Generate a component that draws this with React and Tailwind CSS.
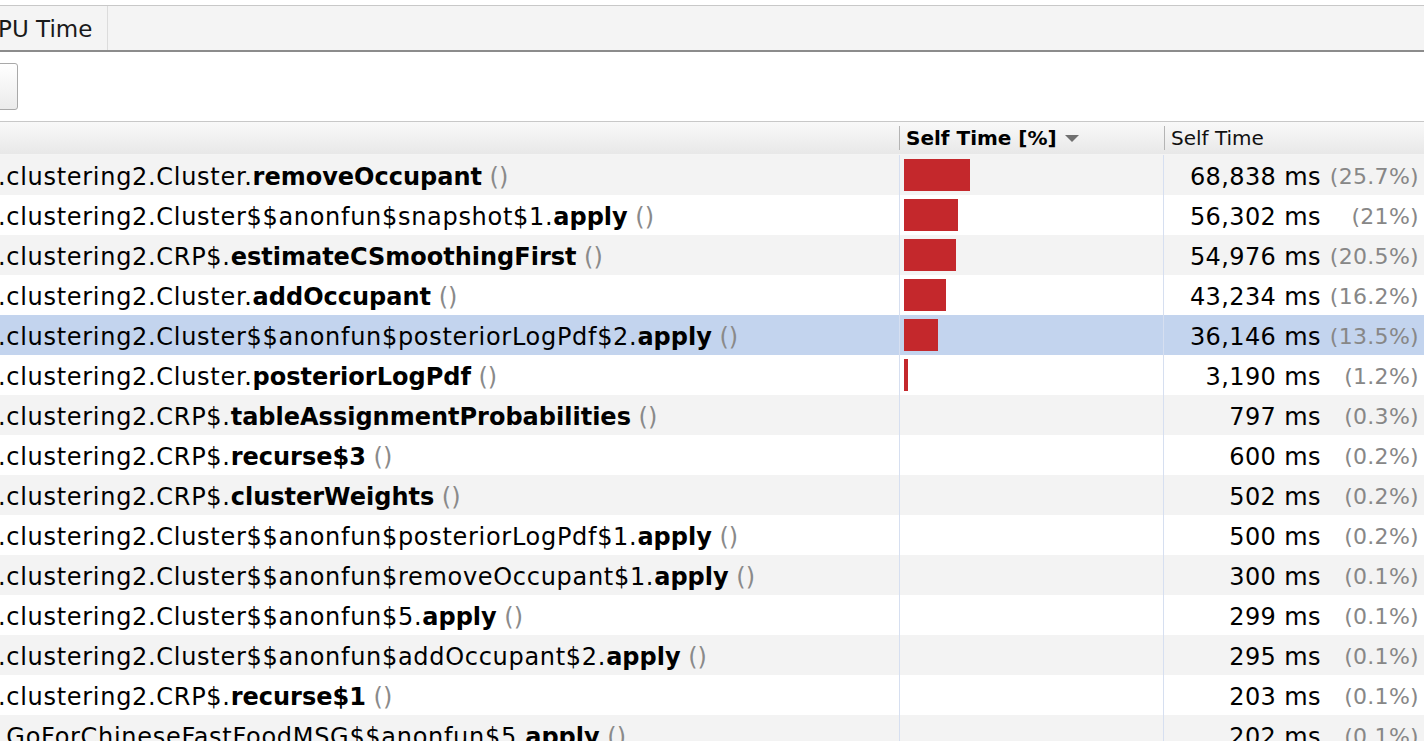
import React from "react";

const rows = [
  { pre: ".clustering2.Cluster.", fn: "removeOccupant", ms: "68,838 ms", pct: "(25.7%)", bar: 66 },
  { pre: ".clustering2.Cluster$$anonfun$snapshot$1.", fn: "apply", ms: "56,302 ms", pct: "(21%)", bar: 54 },
  { pre: ".clustering2.CRP$.", fn: "estimateCSmoothingFirst", ms: "54,976 ms", pct: "(20.5%)", bar: 52 },
  { pre: ".clustering2.Cluster.", fn: "addOccupant", ms: "43,234 ms", pct: "(16.2%)", bar: 42 },
  { pre: ".clustering2.Cluster$$anonfun$posteriorLogPdf$2.", fn: "apply", ms: "36,146 ms", pct: "(13.5%)", bar: 34, selected: true },
  { pre: ".clustering2.Cluster.", fn: "posteriorLogPdf", ms: "3,190 ms", pct: "(1.2%)", bar: 4 },
  { pre: ".clustering2.CRP$.", fn: "tableAssignmentProbabilities", ms: "797 ms", pct: "(0.3%)", bar: 0 },
  { pre: ".clustering2.CRP$.", fn: "recurse$3", ms: "600 ms", pct: "(0.2%)", bar: 0 },
  { pre: ".clustering2.CRP$.", fn: "clusterWeights", ms: "502 ms", pct: "(0.2%)", bar: 0 },
  { pre: ".clustering2.Cluster$$anonfun$posteriorLogPdf$1.", fn: "apply", ms: "500 ms", pct: "(0.2%)", bar: 0 },
  { pre: ".clustering2.Cluster$$anonfun$removeOccupant$1.", fn: "apply", ms: "300 ms", pct: "(0.1%)", bar: 0 },
  { pre: ".clustering2.Cluster$$anonfun$5.", fn: "apply", ms: "299 ms", pct: "(0.1%)", bar: 0 },
  { pre: ".clustering2.Cluster$$anonfun$addOccupant$2.", fn: "apply", ms: "295 ms", pct: "(0.1%)", bar: 0 },
  { pre: ".clustering2.CRP$.", fn: "recurse$1", ms: "203 ms", pct: "(0.1%)", bar: 0 },
  { pre: ".GoForChineseFastFoodMSG$$anonfun$5.", fn: "apply", ms: "202 ms", pct: "(0.1%)", bar: 0 },
];

export default function App() {
  return (
    <div className="w-[1424px] h-[741px] overflow-hidden bg-white text-black font-['DejaVu_Sans',sans-serif]">
      {/* top edge */}
      <div className="h-[6px] bg-white border-b border-[#c8c8c8]"></div>

      {/* Tab strip */}
      <div className="h-[46px] bg-[#f4f4f4] border-b-2 border-[#8c8c8c] flex">
        <div className="w-[108px] border-r border-[#dcdcdc] flex items-center overflow-hidden pt-[3px]">
          <span className="ml-[-18px] text-[23px] whitespace-nowrap text-[#1a1a1a]">CPU Time</span>
        </div>
      </div>

      {/* Toolbar */}
      <div className="h-[70px] border-b border-[#c8c8c8] pt-[11px]">
        <div className="ml-[-10px] w-[28px] h-[47px] rounded-[3px] border border-[#a9a9a9] bg-linear-to-b from-[#ffffff] to-[#ebebeb]"></div>
      </div>

      {/* Column header */}
      <div className="h-[33px] flex items-center bg-linear-to-b from-[#f9f9f9] to-[#e8e8e8] border-b border-[#f4f4f4]">
        <div className="w-[899px]"></div>
        <div className="w-[265px] flex items-center h-full">
          <span className="w-px h-[24px] bg-[#b4b4b4]"></span>
          <span className="ml-[6px] text-[20px] font-bold whitespace-nowrap">Self Time [%]</span>
          <svg className="ml-[8px] mt-[2px]" width="14" height="8" viewBox="0 0 14 8">
            <path d="M0 0 L14 0 L7 7 Z" fill="#707070" />
          </svg>
        </div>
        <div className="flex-1 flex items-center h-full">
          <span className="w-px h-[24px] bg-[#b4b4b4]"></span>
          <span className="ml-[6px] text-[20px] whitespace-nowrap text-[#111]">Self Time</span>
        </div>
      </div>

      {/* Rows */}
      <div className="flex flex-col">
        {rows.map((r, i) => (
          <div
            key={i}
            className={`h-[40px] flex shrink-0 ${
              r.selected ? "bg-[#c3d4ee]" : i % 2 === 0 ? "bg-[#f3f3f3]" : "bg-white"
            }`}
          >
            <div className="w-[900px] border-r border-[#d6dff0] flex items-center overflow-hidden pt-[3px]">
              <span className="ml-[-2px] text-[24px] whitespace-nowrap">
                <span className="tracking-[0.7px]">{r.pre}</span>
                <span className="font-bold">{r.fn}</span>
                <span className="text-[#8a8a8a]"> ()</span>
              </span>
            </div>
            <div className="w-[264px] border-r border-[#d6dff0] flex items-center pl-[4px]">
              {r.bar > 0 && <div className="h-[32px] bg-[#c4282c]" style={{ width: r.bar }}></div>}
            </div>
            <div className="flex-1 flex items-center justify-end pr-[5px] pt-[3px] whitespace-nowrap">
              <span className="text-[24px] tracking-[0.4px]">{r.ms}</span>
              <span className="w-[98px] text-right text-[22px] tracking-[0.3px] text-[#878787]">{r.pct}</span>
            </div>
          </div>
        ))}
      </div>
    </div>
  );
}
